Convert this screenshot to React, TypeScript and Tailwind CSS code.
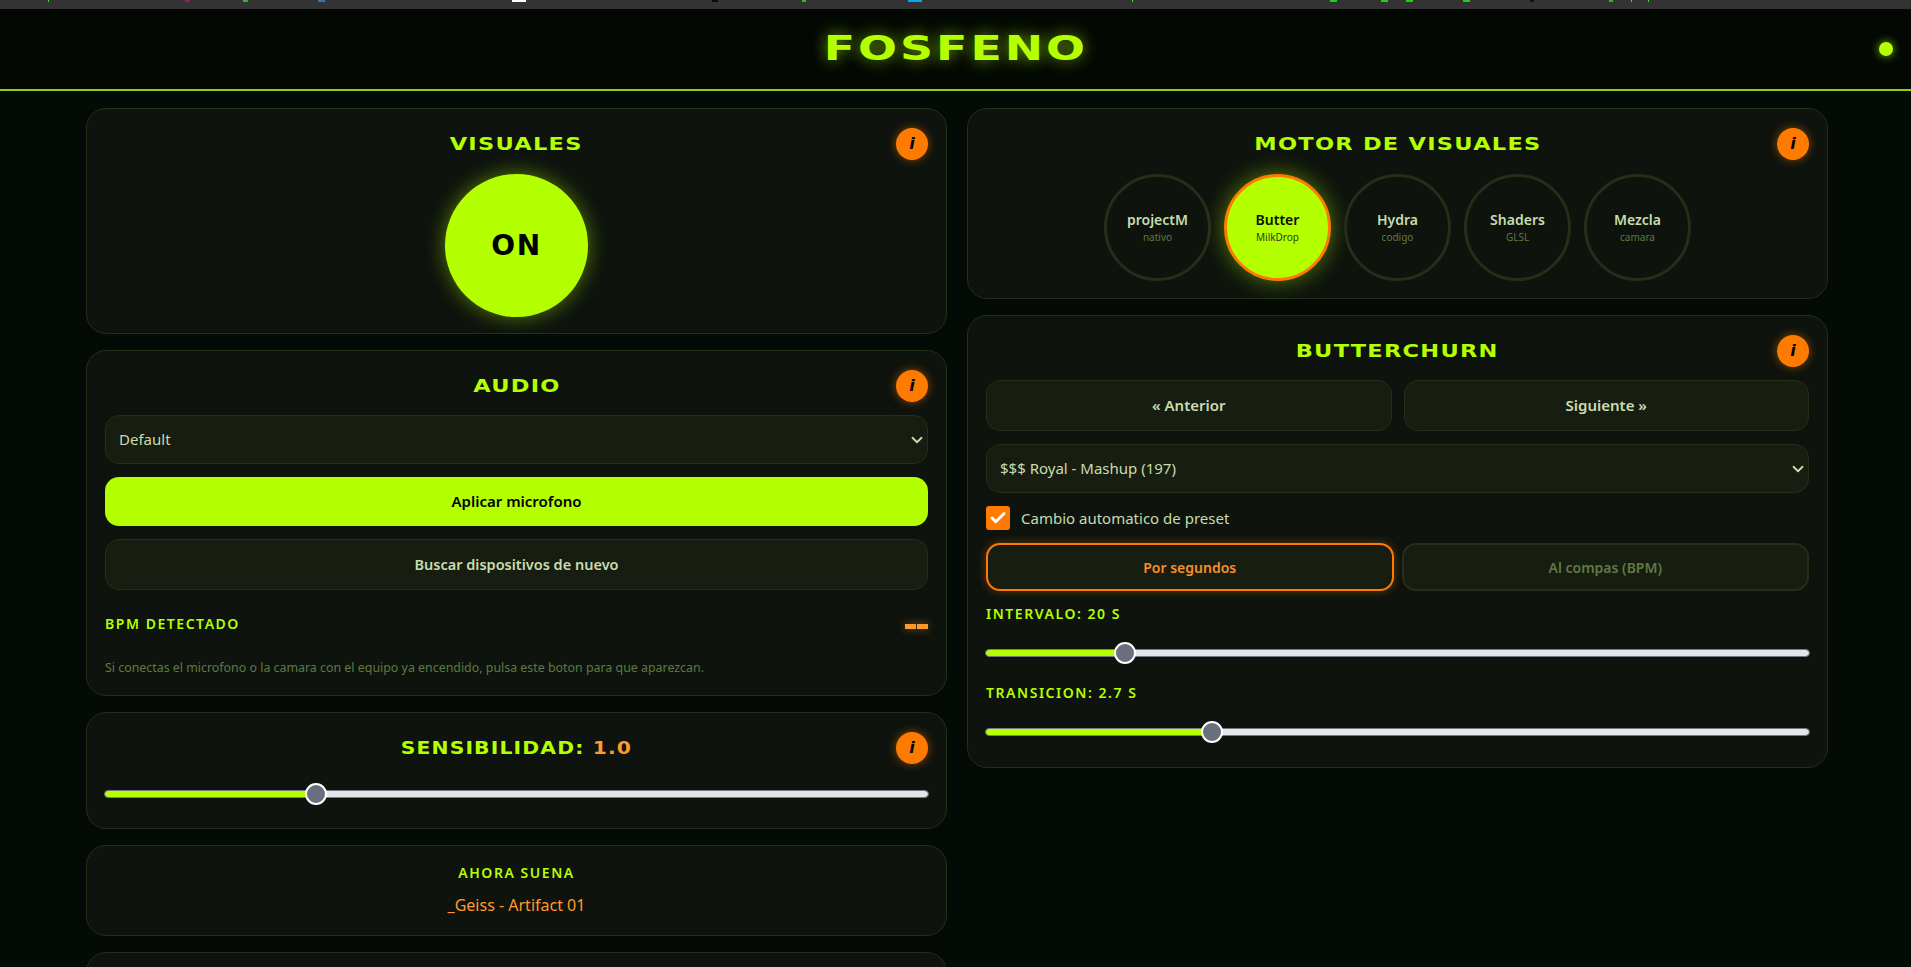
import { ReactNode } from 'react'
import { Check, ChevronDown } from 'lucide-react'

const tabMarks = [
    { x: 48, w: 1, color: '#2ee62e' },
    { x: 185, w: 5, color: '#b0105a' },
    { x: 243, w: 5, color: '#2fb52f' },
    { x: 318, w: 7, color: '#2f74b5' },
    { x: 512, w: 14, color: '#ffffff' },
    { x: 712, w: 6, color: '#0a0a0a' },
    { x: 802, w: 4, color: '#2fb52f' },
    { x: 908, w: 14, color: '#0aa5f0' },
    { x: 1132, w: 1, color: '#2ee62e' },
    { x: 1330, w: 7, color: '#19d219' },
    { x: 1381, w: 7, color: '#19d219' },
    { x: 1406, w: 7, color: '#19d219' },
    { x: 1463, w: 7, color: '#19d219' },
    { x: 1530, w: 4, color: '#111111' },
    { x: 1609, w: 4, color: '#2fb52f' },
    { x: 1631, w: 1, color: '#2ee62e' },
    { x: 1648, w: 1, color: '#2ee62e' },
]

const engines = [
    { name: 'projectM', sub: 'nativo' },
    { name: 'Butter', sub: 'MilkDrop', active: true },
    { name: 'Hydra', sub: 'codigo' },
    { name: 'Shaders', sub: 'GLSL' },
    { name: 'Mezcla', sub: 'camara' },
]

const titleFont = "font-['DejaVu_Sans',sans-serif]"

function InfoBadge() {
    return (
        <button className="absolute top-[19px] right-[18px] w-8 h-8 rounded-full bg-[#ff7b00] shadow-[0_0_10px_rgba(255,123,0,0.5)] flex items-center justify-center text-black text-[16px] font-bold italic font-['DejaVu_Sans',sans-serif]">
            i
        </button>
    )
}

function Title({ children, stretch = 'scale-x-[1.25]' }: { children: ReactNode; stretch?: string }) {
    return (
        <h2 className={`${titleFont} h-[24px] mb-[8px] flex items-center justify-center text-[#b4ff00] text-[18px] font-bold tracking-[1px] uppercase whitespace-pre`}>
            <span className={`inline-block ${stretch}`}>{children}</span>
        </h2>
    )
}

function Card({ children, className = '' }: { children: ReactNode; className?: string }) {
    return (
        <section className={`relative rounded-[20px] border border-[#252e18] bg-[#0e130d] px-[18px] pt-[22px] ${className}`}>
            {children}
        </section>
    )
}

function Slider({ percent }: { percent: number }) {
    return (
        <div className="relative h-[6px] rounded-full bg-[#e6e6ea] outline outline-1 outline-[#777a80]">
            <div className="h-full rounded-full bg-[#b4ff00]" style={{ width: `${percent}%` }} />
            <div
                className="absolute top-1/2 -translate-x-1/2 -translate-y-1/2 w-[22px] h-[22px] rounded-full bg-[#6b6e7c] border-2 border-white"
                style={{ left: `${percent}%` }}
            />
        </div>
    )
}

function Select({ value }: { value: string }) {
    return (
        <div className="relative">
            <select
                defaultValue={value}
                className="appearance-none w-full h-[49px] rounded-[14px] border border-[#252e18] bg-[#181d12] pl-[13px] text-[#c8dcae] text-[15px]"
            >
                <option>{value}</option>
            </select>
            <ChevronDown
                size={18}
                strokeWidth={2.4}
                className="absolute right-[2px] top-1/2 -translate-y-1/2 text-[#c8dcae] pointer-events-none"
            />
        </div>
    )
}

function EngineButton({ name, sub, active }: { name: string; sub: string; active?: boolean }) {
    return (
        <button
            className={`w-[107px] h-[107px] rounded-full border-[3px] flex flex-col items-center justify-center pb-[1px] ${
                active
                    ? 'bg-[#b4ff00] border-[#ff7b00] shadow-[0_0_22px_rgba(180,255,0,0.45)] text-[#0a0f05]'
                    : 'border-[#252e18] text-[#c8dcae]'
            }`}
        >
            <span className="text-[14px] font-semibold leading-[20px]">{name}</span>
            <span className={`text-[10px] leading-[14px] ${active ? 'text-[#2c3a10]' : 'text-[#5f7a40]'}`}>{sub}</span>
        </button>
    )
}

export default function App() {
    return (
        <div className="h-[967px] overflow-hidden bg-[#040a05] font-['Noto_Sans','Open_Sans',sans-serif]">
            <div className="relative h-[9px] bg-[#333333]">
                {tabMarks.map((m) => (
                    <span
                        key={m.x}
                        className="absolute top-0 h-[2px]"
                        style={{ left: m.x, width: m.w, background: m.color }}
                    />
                ))}
            </div>

            <header className="relative h-[82px] pb-[1px] flex items-center justify-center border-b-2 border-[#94cf05] bg-[#030803]">
                <h1
                    className={`${titleFont} text-[#b4ff00] text-[34px] font-bold tracking-[2.2px] scale-x-[1.35] [text-shadow:0_0_14px_rgba(180,255,0,0.6)]`}
                >
                    FOSFENO
                </h1>
                <span className="absolute right-[18px] top-[33px] w-[14px] h-[14px] rounded-full bg-[#b4ff00] shadow-[0_0_10px_rgba(180,255,0,0.7)]" />
            </header>

            <main className="grid grid-cols-2 gap-[20px] pl-[86px] pr-[83px] pt-[17px]">
                <div className="flex flex-col gap-[16px]">
                    <Card className="h-[226px]">
                        <InfoBadge />
                        <Title>VISUALES</Title>
                        <button className="mx-auto mt-[19px] flex items-center justify-center w-[143px] h-[143px] rounded-full bg-[#b4ff00] shadow-[0_0_20px_rgba(180,255,0,0.45)] text-black text-[28px] font-bold tracking-[0.06em] font-['DejaVu_Sans',sans-serif]">
                            ON
                        </button>
                    </Card>

                    <Card className="h-[346px]">
                        <InfoBadge />
                        <Title>AUDIO</Title>
                        <div className="mt-[18px] flex flex-col">
                            <Select value="Default" />
                            <button className="mt-[13px] h-[49px] rounded-[14px] bg-[#b4ff00] text-black text-[15px] font-semibold">
                                Aplicar microfono
                            </button>
                            <button className="mt-[13px] h-[51px] rounded-[14px] border border-[#252e18] bg-[#181d12] text-[#c8dcae] text-[14.5px] font-semibold">
                                Buscar dispositivos de nuevo
                            </button>
                        </div>
                        <div className="mt-[21px] flex items-center justify-between h-[24px]">
                            <span className="text-[#b4ff00] text-[14px] font-semibold tracking-[0.11em]">BPM DETECTADO</span>
                            <span className="flex gap-[1px] pt-[6px]">
                                <span className="w-[11px] h-[5px] bg-[#ff9a2e] shadow-[0_0_8px_rgba(255,154,46,0.5)]" />
                                <span className="w-[11px] h-[5px] bg-[#ff9a2e] shadow-[0_0_8px_rgba(255,154,46,0.5)]" />
                            </span>
                        </div>
                        <p className="mt-[24px] text-[#5f7a40] text-[12.4px]">
                            Si conectas el microfono o la camara con el equipo ya encendido, pulsa este boton para que aparezcan.
                        </p>
                    </Card>

                    <Card className="h-[117px]">
                        <InfoBadge />
                        <Title stretch="scale-x-[1.13]">
                            SENSIBILIDAD: <span className="text-[#ff9a2e]">1.0</span>
                        </Title>
                        <div className="mt-[32px]">
                            <Slider percent={25.6} />
                        </div>
                    </Card>

                    <Card className="h-[91px] text-center">
                        <div className="text-[#b4ff00] text-[14px] font-semibold tracking-[0.11em] leading-[14px] mt-[-2px]">AHORA SUENA</div>
                        <div className="mt-[13px] text-[#ff9a2e] text-[16px] leading-[24px]">_Geiss - Artifact 01</div>
                    </Card>

                    <Card className="h-[120px]">
                        <span />
                    </Card>
                </div>

                <div className="flex flex-col gap-[16px]">
                    <Card className="h-[191px]">
                        <InfoBadge />
                        <Title>MOTOR DE VISUALES</Title>
                        <div className="mt-[19px] flex justify-center gap-[13px]">
                            {engines.map((e) => (
                                <EngineButton key={e.name} {...e} />
                            ))}
                        </div>
                    </Card>

                    <Card className="h-[453px]">
                        <InfoBadge />
                        <Title>BUTTERCHURN</Title>
                        <div className="mt-[18px] grid grid-cols-2 gap-[12px]">
                            <button className="h-[51px] rounded-[14px] border border-[#252e18] bg-[#181d12] text-[#c8dcae] text-[15px] font-semibold">
                                « Anterior
                            </button>
                            <button className="h-[51px] rounded-[14px] border border-[#252e18] bg-[#181d12] text-[#c8dcae] text-[15px] font-semibold">
                                Siguiente »
                            </button>
                        </div>
                        <div className="mt-[13px]">
                            <Select value="$$$ Royal - Mashup (197)" />
                        </div>
                        <label className="mt-[13px] flex items-center gap-[11px] h-[24px] text-[#c8dcae] text-[15px]">
                            <span className="w-[24px] h-[24px] rounded-[3px] bg-[#ff7b00] flex items-center justify-center">
                                <Check size={18} strokeWidth={4} className="text-white" />
                            </span>
                            Cambio automatico de preset
                        </label>
                        <div className="mt-[13px] grid grid-cols-2 gap-[8px]">
                            <button className="h-[48px] rounded-[14px] border-2 border-[#ff7b00] bg-[#181d12] shadow-[0_0_10px_rgba(255,123,0,0.35)] text-[#f5912a] text-[14px] font-semibold">
                                Por segundos
                            </button>
                            <button className="h-[48px] rounded-[14px] border-2 border-[#252e18] bg-[#181d12] text-[#5f7a40] text-[14px] font-semibold">
                                Al compas (BPM)
                            </button>
                        </div>
                        <div className="mt-[14px] h-[18px] leading-[18px] text-[#b4ff00] text-[14px] font-semibold tracking-[0.11em]">INTERVALO: 20 S</div>
                        <div className="mt-[27px]">
                            <Slider percent={16.9} />
                        </div>
                        <div className="mt-[28px] h-[18px] leading-[18px] text-[#b4ff00] text-[14px] font-semibold tracking-[0.11em]">TRANSICION: 2.7 S</div>
                        <div className="mt-[27px]">
                            <Slider percent={27.5} />
                        </div>
                    </Card>
                </div>
            </main>
        </div>
    )
}
